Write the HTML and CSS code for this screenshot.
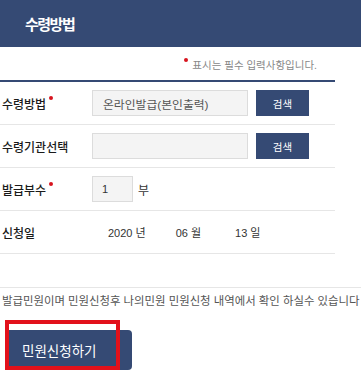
FILE: index.html
```html
<!DOCTYPE html>
<html lang="ko">
<head>
    <meta charset="UTF-8">
    <meta name="viewport" content="width=device-width, initial-scale=1.0">
    <title>수령방법</title>
    <link rel="stylesheet" href="styles.css">
</head>
<body>
    <header class="page-head">
        <h2 class="page-title">수령방법</h2>
    </header>

    <section class="form-wrap">
        <p class="req-note"><span class="req-dot"></span>표시는 필수 입력사항입니다.</p>
        <div class="form-table">
            <div class="form-row">
                <div class="form-label">수령방법<span class="req-dot"></span></div>
                <div class="form-field">
                    <div class="field-input wide">온라인발급(본인출력)</div>
                    <button type="button" class="search-btn">검색</button>
                </div>
            </div>
            <div class="form-row">
                <div class="form-label">수령기관선택</div>
                <div class="form-field">
                    <div class="field-input wide"></div>
                    <button type="button" class="search-btn">검색</button>
                </div>
            </div>
            <div class="form-row">
                <div class="form-label">발급부수<span class="req-dot"></span></div>
                <div class="form-field">
                    <div class="field-input short">1</div>
                    <span class="unit">부</span>
                </div>
            </div>
            <div class="form-row">
                <div class="form-label">신청일</div>
                <div class="form-field date-field">
                    <span class="date-part">2020 년</span>
                    <span class="date-part">06 월</span>
                    <span class="date-part">13 일</span>
                </div>
            </div>
        </div>
    </section>

    <p class="guide">발급민원이며 민원신청후 나의민원 민원신청 내역에서 확인 하실수 있습니다</p>

    <div class="submit-area">
        <button type="button" class="submit-btn">민원신청하기</button>
        <span class="highlight-box"></span>
    </div>
</body>
</html>
```

FILE: styles.css
```css
* {
    margin: 0;
    padding: 0;
    box-sizing: border-box;
}

:root {
    --navy: #354a74;
    --text: #1a1a1a;
    --line: #e6e6e6;
    --req: #d7141e;
}

body {
    background-color: #fff;
    color: var(--text);
    font-family: 'Liberation Sans', 'Noto Sans CJK KR', sans-serif;
    font-size: 11px;
    width: 361px;
    overflow: hidden;
}

.page-head {
    background-color: var(--navy);
    height: 47px;
    display: flex;
    align-items: center;
    padding-left: 25px;
}

.page-title {
    color: #fff;
    font-size: 15px;
    font-weight: 700;
    letter-spacing: -1.5px;
}

.form-wrap {
    width: 335px;
    margin-bottom: 33px;
}

.req-note {
    height: 33px;
    display: flex;
    align-items: center;
    justify-content: flex-end;
    padding: 2px 18px 0 0;
    font-size: 10.5px;
    color: #888;
}

.req-note .req-dot {
    top: -5px;
    margin: 0 4px 0 0;
}

.req-dot {
    display: inline-block;
    width: 4px;
    height: 4px;
    border-radius: 50%;
    background-color: var(--req);
    margin-left: 3px;
    position: relative;
    top: -9px;
}

.form-table {
    border-top: 2px solid var(--navy);
}

.form-row {
    height: 43px;
    display: flex;
    align-items: center;
    border-bottom: 1px solid var(--line);
}

.form-label {
    width: 92px;
    padding-left: 2px;
    font-size: 12px;
    font-weight: 500;
    color: var(--text);
    white-space: nowrap;
}

.form-field {
    display: flex;
    align-items: center;
}

.field-input {
    height: 26px;
    background-color: #f4f4f4;
    border: 1px solid #dcdcdc;
    display: flex;
    align-items: center;
    padding-left: 10px;
    font-size: 11.8px;
    color: #555;
}

.field-input.wide {
    width: 156px;
}

.field-input.short {
    width: 41px;
    padding-left: 9px;
    font-size: 11px;
    color: #333;
}

.search-btn {
    width: 53px;
    height: 26px;
    margin-left: 8px;
    border: none;
    background-color: var(--navy);
    color: #fff;
    font-family: inherit;
    font-size: 10.5px;
}

.unit {
    margin-left: 5px;
    font-size: 12px;
    color: #333;
}

.date-field {
    padding-left: 16px;
    color: #333;
}

.date-part + .date-part {
    margin-left: 30px;
}

.date-part:last-child {
    margin-left: 34px;
}

.guide {
    border-top: 1px solid var(--line);
    padding-top: 5px;
    padding-left: 2px;
    line-height: 16px;
    font-size: 11.4px;
    color: #555;
    white-space: nowrap;
    overflow: hidden;
}

.submit-area {
    position: relative;
    margin: 21px 0 0 5px;
    width: 127px;
}

.submit-btn {
    width: 127px;
    height: 40px;
    border: none;
    border-radius: 4px;
    background-color: var(--navy);
    color: #fff;
    font-family: inherit;
    font-size: 13.5px;
    text-align: left;
    padding-left: 17px;
}

/* annotation box drawn over the button */
.highlight-box {
    position: absolute;
    left: 0;
    top: -10px;
    width: 115px;
    height: 50px;
    border: 4px solid #e2111b;
}
```
